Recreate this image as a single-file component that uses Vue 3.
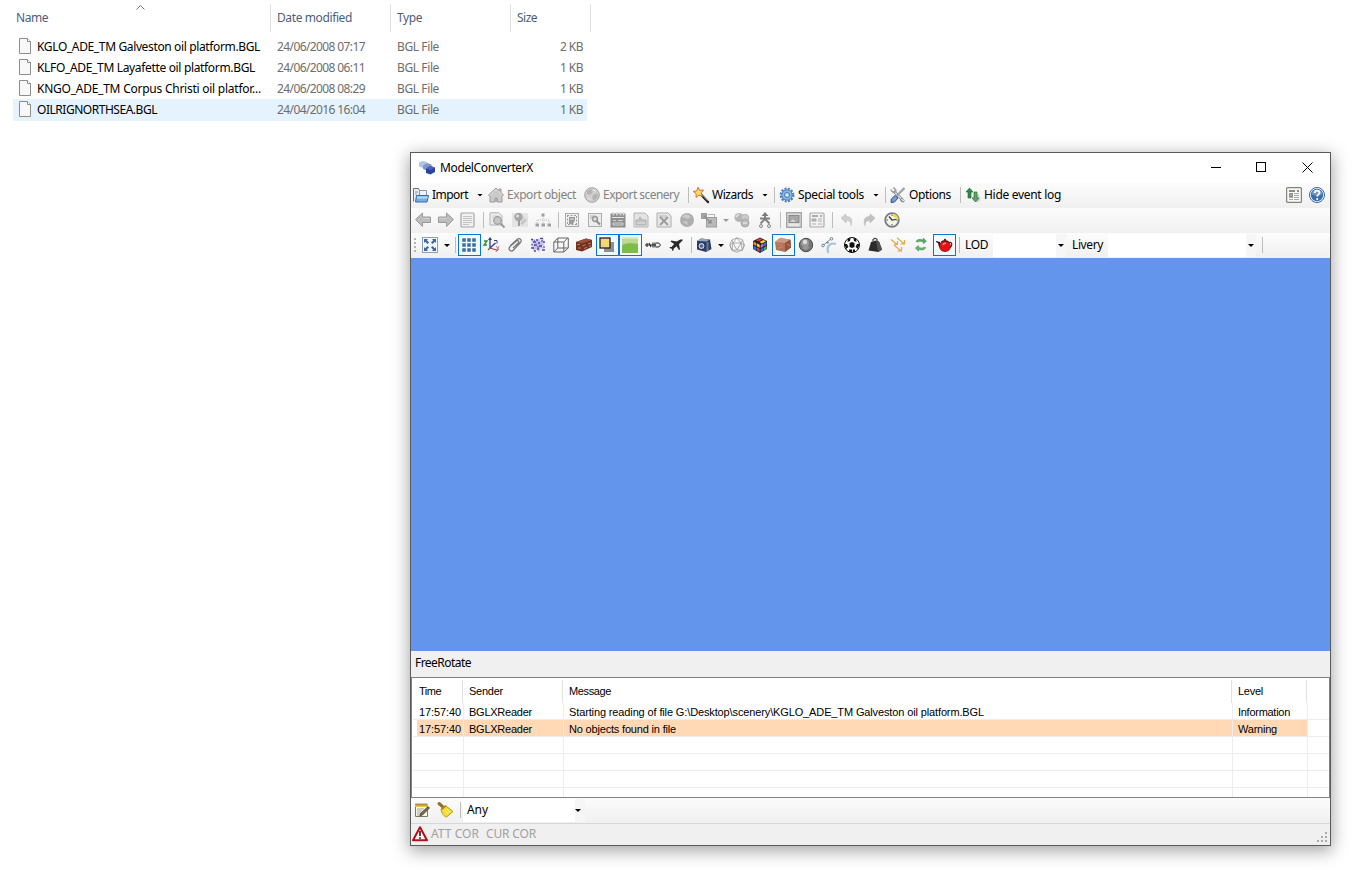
<script setup>
// Adjusts tracking so that a label takes exactly the given width.
const vFit = {
  mounted(el, { value }) {
    const natural = el.getBoundingClientRect().width
    el.style.letterSpacing = `${(value - natural) / el.textContent.length}px`
  },
}

const files = [
  { name: 'KGLO_ADE_TM Galveston oil platform.BGL', w: 223, date: '24/06/2008 07:17', size: '2 KB' },
  { name: 'KLFO_ADE_TM Layafette oil platform.BGL', w: 218, date: '24/06/2008 06:11', size: '1 KB' },
  { name: 'KNGO_ADE_TM Corpus Christi oil platfor...', w: 224, date: '24/06/2008 08:29', size: '1 KB' },
  { name: 'OILRIGNORTHSEA.BGL', w: 120, date: '24/04/2016 16:04', size: '1 KB', hover: true },
]

const menu = [
  { icon: 'import', text: 'Import', w: 36, drop: true },
  { icon: 'house', text: 'Export object', w: 69, off: true },
  { icon: 'globeOff', text: 'Export scenery', w: 76, off: true },
  { sep: true },
  { icon: 'wand', text: 'Wizards', w: 41, drop: true },
  { sep: true },
  { icon: 'gear', text: 'Special tools', w: 66, drop: true },
  { sep: true },
  { icon: 'tools', text: 'Options', w: 42 },
  { sep: true },
  { icon: 'arrows', text: 'Hide event log', w: 77 },
]

const tools = [
  'left', 'right', 'page', '|', 'find', 'pin', 'tree', '|', 'resize', 'wrench', 'clap', 'sheet', 'sheetX', 'ball',
  'scale>', 'merge', 'person', '|', 'screen', 'news', '|', 'undo', 'redo', 'clock!',
]
const views = [
  'expand>', '|', 'grid*', 'axes', 'clip', 'cloud', 'cube', 'brick', 'shadow*', 'ground*', 'bones', 'plane', '|',
  'camera>', 'wire', 'rubik', 'crate*', 'sphere', 'curve', 'soccer', 'weight', 'normals', 'refresh', 'teapot*', '|',
]
const parse = (s) => ({
  sep: s === '|',
  drop: s.endsWith('>'),
  on: s.endsWith('*'),
  live: s.endsWith('!'),
  icon: s.replace(/[>*!]/, ''),
})
const toolItems = tools.map(parse)
const viewItems = views.map(parse)

const log = [
  { time: '17:57:40', sender: 'BGLXReader', msg: 'Starting reading of file G:\\Desktop\\scenery\\KGLO_ADE_TM Galveston oil platform.BGL', w: 415, level: 'Information', lw: 52 },
  { time: '17:57:40', sender: 'BGLXReader', msg: 'No objects found in file', w: 107, level: 'Warning', lw: 39, warn: true },
]

const icons = {
  file: '<path d="M2.500.5h8l3 3v12h-11z" fill="#f8f8f8" stroke="#8d8d8d"/><path d="M10.500.5v3h3" fill="#fff" stroke="#8d8d8d"/>',
  app: '<path d="M0 2.500l3.500-1.500 4.500 1v4.500L4 8 0 6.500z" fill="#b4c3e4"/><path d="M4 5.500l4-2.500 4.500 1.500V9L8.500 11 4 9z" fill="#7e95d2"/><path d="M7 8.500L11.500 6 16 7.500V12l-4.500 2.500L7 13z" fill="#2c439c"/><path d="M7 8.500L11.500 6 16 7.500 11.500 10z" fill="#4e66b8"/>',
  import: '<path d="M.5 14.500V1.500h5l1 2h6v4" fill="#e8edf2" stroke="#67717c"/><path d="M2 5h3M2 7h2" stroke="#8b9aa8"/><path d="M6.500 3.500h7v6h-7z" fill="#eef3f8" stroke="#8a97a5"/><path d="M3.500 8.500h12l-1.500 6.500H2.500z" fill="#78afe2" stroke="#2e6da8"/><path d="M4 10.500h10.500" stroke="#b6d9f5" stroke-width="2"/>',
  house: '<path d="M8 1L.5 8 2 9.500V15h5v-4h2v4h5V9.500L15.500 8 13 5.500V2h-2v2z" fill="#cacaca" stroke="#9c9c9c"/><path d="M2 8l6-5.500L14 8" fill="none" stroke="#dedede"/><path d="M7 11h3v4H7z" fill="#aaa"/>',
  globeOff: '<circle cx="8" cy="8" r="7.300" fill="#d0d0d0" stroke="#a2a2a2"/><path d="M3 4l4-2 2 3-3 3-3-1zM9 8l4-2 1 4-4 4-2-3z" fill="#b4b4b4"/><path d="M9 3l3 1M4 11l3 2" stroke="#e8e8e8"/>',
  wand: '<path d="M7.500 7l7.500 8" stroke="#222" stroke-width="2.400" stroke-linecap="round"/><path d="M8.500 7.200l6 6.500" stroke="#999" stroke-width=".8"/><path d="M5 .3l1.500 3L10.500 3 8.200 5.800l1.500 3.400L6 8l-3 2.500.200-3.700L.3 4.500l3.500-.7z" fill="#ffdd62" stroke="#d5602a" stroke-width=".9"/>',
  gear: '<circle cx="8" cy="8" r="6.300" fill="none" stroke="#4a80bd" stroke-width="2.200" stroke-dasharray="2.100 1.200"/><circle cx="8" cy="8" r="5.200" fill="#8cb4e0" stroke="#4f85c2"/><circle cx="8" cy="8" r="2.600" fill="#a8c8e9" stroke="#4e85c0"/><circle cx="8" cy="8" r="1.100" fill="#f4f7fb"/>',
  tools: '<path d="M4 4.500l9 9" stroke="#808890" stroke-width="2.600"/><path d="M4 4.500l9 9" stroke="#e4e7ea" stroke-width="1.200"/><path d="M1 2.500l1.500 2H5l-.2-2.500L3.200.8A3 3 0 0 1 6 5 3 3 0 0 1 1 2.500z" fill="#c3c9cf" stroke="#7c858d" stroke-width=".7"/><path d="M14.500 13.500a2 2 0 1 1-2.500-2.500" fill="none" stroke="#727c86"/><path d="M14.500 1L7 8.500" stroke="#747d86" stroke-width="2"/><path d="M14.500 1L7 8.500" stroke="#dfe3e6" stroke-width=".8"/><path d="M5 8.500l3 2.500-3.500 4-3.500.5.3-3.500z" fill="#7d9dcb" stroke="#2b5390"/>',
  arrows: '<path d="M8 13l5 2.500 2.500-3-2-6" fill="#d2d2d2"/><path d="M4.500 1L8 5H6v6H3V5H1z" fill="#2f8a42" stroke="#1d6630" stroke-width=".6"/><path d="M10.500 15L7 11h2V5h3v6h2z" fill="#5ca465" stroke="#28733b" stroke-width=".7"/>',
  news: '<rect x="1" y="1" width="14" height="14" rx="1" fill="#f0f0f0" stroke="#a0a0a0" stroke-width="1.200"/><path d="M3 4h6M11 4h2" stroke="#888" stroke-width="1.600"/><path d="M3 7h4v2H3z" fill="#bbb" stroke="#999"/><path d="M9 7h4M9 9h4M3 12h4M9 12h4" stroke="#a8a8a8"/>',
  info: '<rect x=".6" y=".6" width="14.800" height="14.800" rx="1" fill="#f8f8f6" stroke="#85837d" stroke-width="1.200"/><path d="M3 4h6M11 4h2" stroke="#666" stroke-width="1.500"/><path d="M3.500 6.500h3v3h-3z" fill="#aaa" stroke="#888"/><path d="M8 6.500h5M8 8.500h5M3 10.500h4M8 10.500h5M3 12.500h4M8 12.500h5" stroke="#aaa8a2"/>',
  help: '<circle cx="8" cy="8" r="7.500" fill="#fff" stroke="#35639e"/><circle cx="8" cy="8" r="6.200" fill="#376cad"/><path d="M2.300 7a6 6 0 0 1 11.400 0C10 9 6 9 2.300 7z" fill="#6e98cb"/><path d="M5.700 6c.2-3.200 4.900-3 4.800-.2C10.400 7.600 8.200 7.700 8.200 9.600" fill="none" stroke="#fff" stroke-width="1.900"/><circle cx="8.200" cy="12" r="1.100" fill="#fff"/>',
  left: '<path d="M1.500 7.500L8.500 1v4h8v5.500h-8v4z" fill="#b4b4b4" stroke="#8a8a8a"/><path d="M9.500 6.500H16" stroke="#ccc"/>',
  right: '<path d="M16.500 7.500L9.500 1v4h-8v5.500h8v4z" fill="#b4b4b4" stroke="#8a8a8a"/><path d="M2 6.500h7" stroke="#ccc"/>',
  page: '<rect x="1" y="1" width="13" height="14" rx="1" fill="#f0f0f0" stroke="#9a9a9a" stroke-width="1.200"/><path d="M3 4.500h9M3 6.500h9M3 8.500h9M3 10.500h9M3 12.500h6" stroke="#bcbcbc"/>',
  find: '<path d="M1 .8h9l3 3V13H1z" fill="#ebebeb" stroke="#a8a8a8"/><path d="M3 4h7M3 6h3" stroke="#ccc"/><circle cx="8.500" cy="8.500" r="3.800" fill="#bdbdbd" stroke="#8a8a8a" stroke-width="1.200"/><path d="M11.500 11.500l4 4" stroke="#8c8c8c" stroke-width="2.200"/>',
  pin: '<path d="M0 1h16v14H0z" fill="#e2e2e2"/><path d="M8 2l7 5-5 7z" fill="#d0d0d0"/><circle cx="6.500" cy="5" r="4.200" fill="#9a9a9a"/><circle cx="5.500" cy="4" r="1.500" fill="#ddd"/><path d="M7 8v6" stroke="#8c8c8c" stroke-width="2"/><path d="M9 12l5-4" stroke="#bbb" stroke-width="2"/>',
  tree: '<path d="M8 4v4M2 11V8h12v3M8 8v3" fill="none" stroke="#b0b0b0" stroke-dasharray="1 1"/><path d="M6.500 1.500h3v3h-3zM.5 11.500h3.500v3H.5zM6.500 11.500H10v3H6.500zM12.500 11.500H16v3h-3.500z" fill="#929292"/>',
  resize: '<rect x="1.500" y="1.500" width="13" height="13" fill="#eee" stroke="#9d9d9d"/><path d="M5 5h6v3L9 12H5z" fill="#8c8c8c"/><path d="M3 3.500h10M3.500 3v10M12.500 4v9M4 12.500h8" stroke="#8c8c8c" stroke-dasharray="2 1.500"/><path d="M6 7h4" stroke="#ddd"/>',
  wrench: '<rect x="1.500" y="1.500" width="13" height="13" fill="#ececec" stroke="#a0a0a0"/><path d="M3 3h5v4H3z" fill="#c8c8c8"/><circle cx="8" cy="7" r="2.400" fill="#ddd" stroke="#888" stroke-width="1.500"/><path d="M9 8.500l4 4" stroke="#7c7c7c" stroke-width="2.200"/>',
  clap: '<rect x=".5" y="1.500" width="15" height="14" fill="#7d7d7d"/><path d="M2 5.500h12" stroke="#e0e0e0"/><path d="M3.500 0v3.500M7 0v3.500M10.500 0v3.500M13.500 0v3.500" stroke="#d5d5d5" stroke-width="1.500"/><path d="M3 8.500h3M8 8.500h5M3 11h10v2H3z" stroke="#d0d0d0" fill="none"/>',
  sheet: '<path d="M1 1h11l3 3v11H1z" fill="#e1e1e1" stroke="#aaa"/><path d="M3 8h3l1-3 2 3h4v5H3z" fill="#bcbcbc" stroke="#a5a5a5"/><path d="M4 11h8M5 4h5" stroke="#ddd"/>',
  sheetX: '<path d="M1 1h11l3 3v11H1z" fill="#e5e5e5" stroke="#a0a0a0"/><path d="M3 3h8v3H3z" fill="#c8c8c8"/><path d="M4 5l8 8M12 5l-8 8" fill="none" stroke="#8a8a8a" stroke-width="1.800"/>',
  ball: '<circle cx="8" cy="8" r="7" fill="#a2a2a2"/><path d="M3 5c3-4 6-3 9 0L9 7zM3 10l5-1 1 4z" fill="#c2c2c2"/>',
  scale: '<path d="M.5 1.500h5v5h-5z" fill="#999" stroke="#888"/><rect x="5.500" y="5.500" width="10" height="9.500" fill="#b0b0b0" stroke="#8f8f8f"/><path d="M3 4l7 7M10 8v3H7" fill="none" stroke="#777" stroke-width="1.200"/><path d="M7 2.500h7M13.500 2v3" stroke="#aaa"/>',
  merge: '<circle cx="5" cy="5.500" r="4.500" fill="#aaa"/><circle cx="11" cy="6" r="3.700" fill="#c6c6c6" stroke="#aaa"/><circle cx="11" cy="11" r="4" fill="#b0b0b0" stroke="#9c9c9c"/><path d="M2 5l3-3M9 11h4" stroke="#e1e1e1" stroke-width="1.500"/>',
  person: '<path d="M8 0l3.500 4H4.500z" fill="#666"/><path d="M8 3v5M3 6.500h10M8 7l-4.500 4.500M8 7l4.500 4.500" stroke="#6c6c6c" stroke-width="1.900"/><circle cx="4" cy="14" r="1.500" fill="#eee" stroke="#777"/><circle cx="12" cy="14" r="1.500" fill="#eee" stroke="#777"/>',
  screen: '<rect x=".7" y=".7" width="14.600" height="14.600" fill="#d8d8d8" stroke="#8c8c8c" stroke-width="1.200"/><rect x="3" y="3.500" width="10" height="7" fill="#999" stroke="#777"/><path d="M4 10l3-3 3 3" fill="#ccc"/><path d="M3 13h10" stroke="#f4f4f4"/>',
  undo: '<path d="M1 6l5-4v2.500c5 0 7 3 5 9 0-3-1-5-5-5V11z" fill="#c8c8c8" stroke="#b2b2b2" stroke-width=".6" transform="translate(2 0)"/>',
  redo: '<path d="M14 6L9 2v2.500c-5 0-7 3-5 9 0-3 1-5 5-5V11z" fill="#b8b8b8" stroke="#aaa" stroke-width=".6"/>',
  clock: '<circle cx="8" cy="8" r="6.800" fill="#f5f3e5" stroke="#777b87" stroke-width="1.800"/><path d="M9 1.500a7 7 0 0 1 5.700 6l-3-1L9 4z" fill="#f5d93b"/><path d="M8 2.500v1.500M8 12v1.500M2.500 8H4M12 8h1.500" stroke="#555"/><path d="M5 4.500L8 8l4-.5" fill="none" stroke="#303540" stroke-width="1.200"/>',
  expand: '<rect x=".5" y=".5" width="15" height="15" fill="#f2f7fc" stroke="#8b9fb9"/><path d="M2 2h4L4.800 3.200 7 5.500 5.500 7 3.200 4.800 2 6zM14 2h-4l1.200 1.200L9 5.500 10.500 7l2.300-2.200L14 6zM2 14h4l-1.200-1.200L7 10.500 5.500 9l-2.300 2.200L2 10zM14 14h-4l1.200-1.200L9 10.500 10.500 9l2.300 2.200L14 10z" fill="#3d669b"/>',
  grid: '<path d="M1 1h4v4H1zM6 1h4v4H6zM11 1h4v4h-4zM1 6h4v4H1zM6 6h4v4H6zM11 6h4v4h-4zM1 11h4v4H1zM6 11h4v4H6zM11 11h4v4h-4z" fill="#3b6ca3" stroke="#f3f8fd" stroke-width=".5"/>',
  axes: '<path d="M6 11V1.500" stroke="#27437f" stroke-width="1.300"/><path d="M6 0l2 3H4z" fill="#27437f"/><path d="M6 11l8 2.500" stroke="#c73447" stroke-width="1.300"/><path d="M6 11l5.500-5" stroke="#3b3f9c" stroke-width="1.400"/><path d="M0 4h3L0 8h3M4 13l2-2" fill="none" stroke="#39833e" stroke-width="1.300"/><path d="M10 3.500h3v3" stroke="#3b3f9c" fill="none"/><path d="M12 9l3 4M15 9l-3 6" stroke="#a95a6d" stroke-width=".8"/>',
  clip: '<path d="M3.500 8.500L10 2.500c2.500-2 5.500.5 3.500 3L6.500 13c-2.500 2.500-6-.5-3.500-3.500L9.500 4c1.500-1 3 .5 2 1.800L6 11" fill="none" stroke="#777" stroke-width="1.200"/>',
  cloud: '<path d="M1 4l3-2 2 2 3-3 1 3 4-2-1 4 2 2-3 1 2 3-3-1-2 4-3-3-3 2v-4L1 9l3-2z" fill="#c4bfe8"/><path d="M1 2.500h2M6 3h2M10 1.500h3M3 5h3M8 6h2M13 5h2M4 8h3M9 9h3M1 11h3M7 12h2M12 13h3M4 14h2" stroke="#4d45a6" stroke-width="1.600"/><path d="M4 3.500h1M11 4h2M1 7.500h2M7 10h2M13 10h2" stroke="#7b70c4" stroke-width="1.400"/>',
  cube: '<path d="M.8 5h10v10H.8zM4.800 1h10.500v10H4.800zM.8 5l4-4M10.800 5l4-4M.8 15l4-4M10.800 15l4.500-4" fill="none" stroke="#666" stroke-width="1"/>',
  brick: '<path d="M0 5l10-3.500L16 3v7L6 14.500 0 13z" fill="#73321f"/><path d="M0 5l10-3.500L16 3 6 6.500z" fill="#94503c"/><path d="M1 7.500h3M6.500 9l3-1.200M12 7l3-1M2 11h3M8 11.500l3-1.200M13 9.500l2-1" stroke="#b87a60" stroke-width="1.200"/>',
  shadow: '<path d="M5 5h10v10H5z" fill="#8f8f8f"/><rect x="1" y="1" width="10" height="10" fill="#f5d675" stroke="#222" stroke-width="1.300"/>',
  ground: '<rect width="16" height="16" fill="#badb8d"/><path d="M0 8c4-2 11-2 16-1v9H0z" fill="#7fbb4b"/><path d="M0 1h16" stroke="#d6e9bd" stroke-width="2"/>',
  bones: '<path d="M0 8h11M2 6v4M4 6l2 4M8 5.500v5M10 5.500v5" stroke="#222" stroke-width="1.100"/><path d="M11 6h2c3 .5 3 3.500 0 4h-2" fill="#eee" stroke="#222"/>',
  plane: '<path d="M14 2.500c1 0 1 .5.500 1L11 7l1 5.500-1 .5L8.500 9.200 5.500 12v1.500l-1 .5-.8-2.200-2.200-.8.5-1h1.500L6.200 7 2.500 4.500 3.300 3.500l5.200 1L12.500 2.500z" fill="#2a2a2a"/>',
  camera: '<path d="M1 4l4-2.500 9 1L15.500 12 10 15 1 12.500z" fill="#2c3f60"/><path d="M1 4l4-2.500 9 1-3.500 2z" fill="#93a5c4"/><path d="M11.500 5v9" stroke="#647aa0" stroke-width="2"/><circle cx="5.500" cy="9" r="3.600" fill="#c2cddd" stroke="#182440"/><circle cx="5.500" cy="9" r="1.800" fill="#4c6797"/>',
  wire: '<path d="M8 .8l5.500 2L15.300 8l-2 5L8 15.300l-5-2L.8 8l2-5zM8 .8L4 6l8 0zM4 6l4 7 4-7M.8 8L4 6 2.800 3M15.300 8L12 6l1.500-3M3 13.300l5-.3 5.300.3M.8 8l2.200 5.300L4 6M15.300 8l-2 5.300L12 6" fill="none" stroke="#999" stroke-width=".8"/>',
  rubik: '<path d="M1 4l7-3.500L15 4v8l-7 4-7-4z" fill="#222"/><path d="M4 3.200L8 1.200l2.500 1.200-4 2.200z" fill="#ee3636"/><path d="M7.500 5l4-2 2.500 1.200L10 6.500z" fill="#f6db2f"/><path d="M1.500 4.600l2.900 1.500v3L1.500 7.600z" fill="#f58a2c"/><path d="M5 6.500l2.700 1.200v3L5 9.300z" fill="#f8db2e"/><path d="M1.500 8.800l2.900 1.500v3L1.500 12z" fill="#3a6be0"/><path d="M8.700 8l2.800-1.400v3L8.700 11z" fill="#f15ac0"/><path d="M5 10.500l2.700 1.300v3L5 13.400z" fill="#ee3636"/><path d="M12 6.300L14.600 5v3L12 9.300z" fill="#3a6be0"/><path d="M8.700 12l2.800-1.500v3L8.700 15z" fill="#3a6be0"/><path d="M12 10.500L14.600 9v3L12 13.400z" fill="#39b951"/>',
  crate: '<path d="M0 5l5-4 10 1.500 1 8L10 15 1 13z" fill="#b4725a"/><path d="M0 5l5-4 10 1.500L10 6z" fill="#cf9884"/><path d="M10 6l5.500-3.500.5 8L10 15z" fill="#925340"/><path d="M2 7l6 1.500M3 11l5-1M12 7l3 2" stroke="#c5866e"/>',
  sphere: '<circle cx="8" cy="8" r="6.700" fill="#777" stroke="#4a4a4a"/><circle cx="7" cy="6" r="4" fill="#999"/><circle cx="7" cy="5" r="2.200" fill="#ddd"/><path d="M4 11l4-2 4 1-4 3z" fill="#999"/>',
  curve: '<path d="M7.500 16c-2.500-6 1-11 7.500-9" fill="none" stroke="#a5c4e4" stroke-width="2.200"/><path d="M2 8.500L10.500 1.500" stroke="#6d8094" stroke-width=".9"/><circle cx="2" cy="8.500" r="1.300" fill="#fff" stroke="#6d8094"/><circle cx="10.500" cy="1.800" r="1.300" fill="#fff" stroke="#6d8094"/><circle cx="6.500" cy="5.500" r="1.100" fill="#617c99"/>',
  soccer: '<circle cx="8" cy="8" r="7.500" fill="#fff" stroke="#111"/><path d="M5.500 6L8 5l2.500 1v4L8 11l-2.500-1zM4 1.500L6.500 1 6 4 3.500 5zM12 1.500L9.500 1 10 4l2.500 1zM.5 7l2.500 0 1.500 3L2 12zM15.500 7L13 7l-1.500 3 2.500 2zM5 12.500l3 0 0 3-3-.5zM11 12.500l-2.200 0 0 3 2.200-.5z" fill="#111"/>',
  weight: '<path d="M4 5l5-1.500 3 1 3 8-3.500 2.500-10-1.500z" fill="#2b2b2b"/><path d="M9 4l2 11 4-2.500-3-8z" fill="#505050"/><path d="M6 4.500V2.500L8 1.300l2 1v2" fill="none" stroke="#444" stroke-width="1.200"/>',
  normals: '<path d="M1 2.500l6 5M7 .8l7 6M4 8l7 6M7.500 4v3.500H4M14.500 3v4h-4M11.500 10v4h-4" fill="none" stroke="#e3a94b" stroke-width="1.200"/>',
  refresh: '<path d="M2 6.500C3 3 8 3 11 4.500V2l4 4-4 3V7C8 5.500 5 6 4.500 7z" fill="#5bab64" stroke="#338246" stroke-width=".6" transform="translate(1.500 -.5) scale(.8)"/><path d="M14 9.500C13 13 8 13 5 11.500V14l-4-4 4-3v2c3 1.500 6 1 6.500 0z" fill="#6bb66b" stroke="#338246" stroke-width=".6" transform="translate(1.500 3) scale(.8)"/>',
  teapot: '<path d="M0 4l4 1 2 6-3-1-1-4-2-1z" fill="#3a0808"/><path d="M13 5.500c3-1 4 3 1 5" fill="none" stroke="#7b0808" stroke-width="1.200"/><path d="M5 5.500c2-2 6-2 8 0 3 4 1 9-4 9s-7-5-4-9z" fill="#e41313" stroke="#8e0b0b" stroke-width=".8"/><path d="M5.500 4.800c2-1.200 5-1.200 7 0" stroke="#3a0808" stroke-width="1.200" fill="none"/><circle cx="9" cy="2.800" r="1.100" fill="#7d0b0b"/><path d="M7 8c.5-1.500 2-2 3-1.500" stroke="#ff9c8c" stroke-width="1.500" fill="none"/>',
  note: '<path d="M1.500 2.500h12v12h-12z" fill="#faf7e6" stroke="#7c7862"/><path d="M1 2.500h13v2.500H1z" fill="#f0c534"/><path d="M2 1v3M4 1v3M6 1v3M8 1v3M10 1v3M12 1v3" stroke="#9a8229" stroke-width=".8"/><path d="M3 7h7M3 9h5M3 11h4M3 13h3" stroke="#a4a4a0"/><path d="M14 4.500l1.500 1.500-7 7-2.500 1 .5-2.500z" fill="#77704c" stroke="#373425" stroke-width=".7"/>',
  broom: '<path d="M2 1.500l4 3.500" stroke="#8a7228" stroke-width="3" stroke-linecap="round"/><path d="M4 7l4.500-3.500L16 9.500 9.500 15C7 14.500 4.500 11.500 4 7z" fill="#f4dc3c" stroke="#b39a1c"/><path d="M4.500 7.500L9 4" stroke="#d07018" stroke-width="1.300"/><path d="M8 8l3 4M10 7l3 3" stroke="#fff08a"/>',
  alert: '<path d="M8 1.200L15 14.300H1z" fill="#f8f4f2" stroke="#b50f18" stroke-width="2" stroke-linejoin="round"/><path d="M8 5v5" stroke="#333" stroke-width="1.800"/><circle cx="8" cy="12" r="1" fill="#333"/>',
}
</script>

<template>
  <main class="desktop">
    <section class="explorer">
      <div class="head">
        <span class="hcell name"><span v-fit="32">Name</span>
          <svg class="caret" width="9" height="5" viewBox="0 0 9 5"><path d="M.5 4.500l4-4 4 4" fill="none" stroke="#777" /></svg>
        </span>
        <span class="hcell date"><span v-fit="75">Date modified</span></span>
        <span class="hcell type"><span v-fit="25">Type</span></span>
        <span class="hcell size"><span v-fit="20">Size</span></span>
      </div>
      <div v-for="f in files" :key="f.name" class="file" :class="{ hover: f.hover }">
        <svg class="ficon" viewBox="0 0 16 16" v-html="icons.file" />
        <span class="fname"><span v-fit="f.w">{{ f.name }}</span></span>
        <span class="fdate"><span v-fit="88">{{ f.date }}</span></span>
        <span class="ftype"><span v-fit="42">BGL File</span></span>
        <span class="fsize"><span v-fit="23">{{ f.size }}</span></span>
      </div>
    </section>

    <section class="window">
      <header class="title">
        <svg class="ic" viewBox="0 0 16 16" v-html="icons.app" />
        <span class="caption"><span v-fit="93">ModelConverterX</span></span>
        <svg class="ctl" width="102" height="11" viewBox="0 0 102 11" fill="none" stroke="#000">
          <path d="M0 5.500h10M45.500.5h9v9h-9z" shape-rendering="crispEdges" />
          <path d="M91.500.5l10 10M101.500.5l-10 10" />
        </svg>
      </header>

      <div class="bar menu">
        <template v-for="(m, i) in menu" :key="i">
          <i v-if="m.sep" class="line" />
          <div v-else class="item" :class="{ off: m.off, dropped: m.drop }">
            <svg class="ic" viewBox="0 0 16 16" v-html="icons[m.icon]" />
            <span v-fit="m.w">{{ m.text }}</span>
            <b v-if="m.drop" class="tri" />
          </div>
        </template>
        <div class="right">
          <svg class="ic" viewBox="0 0 16 16" v-html="icons.info" />
          <svg class="ic" viewBox="0 0 16 16" v-html="icons.help" />
        </div>
      </div>

      <div class="bar tools">
        <template v-for="(t, i) in toolItems" :key="i">
          <i v-if="t.sep" class="sep" />
          <div v-else class="btn" :class="{ drop: t.drop, live: t.live }">
            <svg class="ic" viewBox="0 0 16 16" v-html="icons[t.icon]" />
            <b v-if="t.drop" class="tri gray" />
          </div>
        </template>
      </div>

      <div class="bar views">
        <i class="grip" />
        <template v-for="(t, i) in viewItems" :key="i">
          <i v-if="t.sep" class="sep" />
          <div v-else class="btn" :class="{ drop: t.drop, on: t.on }">
            <svg class="ic" viewBox="0 0 16 16" v-html="icons[t.icon]" />
            <b v-if="t.drop" class="tri" />
          </div>
        </template>
        <span class="lab lod"><span v-fit="23">LOD</span></span>
        <span class="combo c1"><b class="tri" /></span>
        <span class="lab liv"><span v-fit="31">Livery</span></span>
        <span class="combo c2"><b class="tri" /></span>
        <i class="sep" />
      </div>

      <div class="viewport" />
      <div class="mode"><span v-fit="56">FreeRotate</span></div>

      <div class="log">
        <div class="lhead">
          <span><span v-fit="22">Time</span></span><span><span v-fit="34">Sender</span></span><span><span v-fit="42">Message</span></span><span><span v-fit="25">Level</span></span>
        </div>
        <div v-for="(l, i) in log" :key="i" class="lrow" :class="{ warn: l.warn }">
          <span><span v-fit="42">{{ l.time }}</span></span><span><span v-fit="63">{{ l.sender }}</span></span><span><span v-fit="l.w">{{ l.msg }}</span></span><span><span v-fit="l.lw">{{ l.level }}</span></span><span />
        </div>
        <div v-for="n in 4" :key="'e' + n" class="lrow"><span /><span /><span /><span /><span /></div>
      </div>

      <div class="bar filter">
        <svg class="ic" viewBox="0 0 16 16" v-html="icons.note" />
        <svg class="ic" viewBox="0 0 16 16" v-html="icons.broom" />
        <i class="line" />
        <span class="combo c3"><span v-fit="21">Any</span><b class="tri" /></span>
      </div>
      <footer class="status">
        <svg class="ic" viewBox="0 0 16 16" v-html="icons.alert" />
        <span v-fit="48">ATT COR</span>
        <span v-fit="50" class="cur">CUR COR</span>
        <svg class="size-grip" width="11" height="11" viewBox="0 0 11 11"><path d="M8 0h2v2H8zM4 4h2v2H4zM8 4h2v2H8zM0 8h2v2H0zM4 8h2v2H4zM8 8h2v2H8z" fill="#aaa" /></svg>
      </footer>
    </section>
  </main>
</template>

<style>
body { background: #fff; }
</style>

<style scoped>
.desktop {
  position: relative;
  width: 1356px;
  height: 870px;
  overflow: hidden;
  background: #fff;
  font: 12px/16px "Noto Sans", "Open Sans", sans-serif;
  font-stretch: 87.5%;
  color: #000;
  white-space: nowrap;
}
.desktop * { box-sizing: border-box; }
.desktop span > span, .item > span, .mode > span, .status > span { display: inline-block; }
svg { display: block; flex: none; overflow: visible; }
.ic { width: 16px; height: 16px; }

.explorer { width: 591px; padding-top: 4px; }
.head { display: flex; height: 32px; color: #4c607a; }
.hcell { height: 28px; padding: 6px 0 0 6px; border-right: 1px solid #e3e3e3; }
.name { position: relative; width: 271px; padding-left: 16px; }
.date, .type { width: 120px; }
.size { width: 80px; }
.caret { position: absolute; left: 136px; top: 1px; }
.file { display: flex; align-items: center; width: 574px; height: 21px; margin-left: 13px; padding-top: 1px; color: #6d6d6d; }
.file.hover { height: 22px; padding-bottom: 1px; background: #e5f3ff; }
.ficon { width: 16px; height: 16px; margin: -2px 0 0 4px; }
.fname { width: 240px; padding-left: 4px; color: #000; }
.fdate { width: 120px; padding-left: 4px; }
.ftype { width: 120px; padding-left: 4px; }
.fsize { width: 70px; text-align: right; }

.window {
  position: absolute;
  left: 410px;
  top: 152px;
  width: 921px;
  height: 694px;
  display: flex;
  flex-direction: column;
  background: #f0f0f0;
  border: 1px solid #5a5a5a;
  box-shadow: 0 4px 16px 1px rgba(0, 0, 0, 0.36);
}
.title { display: flex; align-items: center; height: 30px; padding: 0 0 1px 8px; background: #fff; }
.title .ic { margin-top: 1px; }
.caption { margin-left: 5px; }
.ctl { margin: 0 17px 0 auto; }

.bar { display: flex; align-items: center; height: 25px; flex: none; padding-bottom: 1px; background: linear-gradient(#fcfcfc, #f0f0f0); }
.menu { padding-left: 2px; }
.item { display: flex; align-items: center; margin-right: 8px; }
.item > span { margin-left: 3px; }
.item.off { color: #838383; }
.item.dropped { margin-right: 0; }
.item .tri { margin: 0 5px 0 9px; }
.line { flex: none; width: 1px; height: 16px; margin: 0 4px 0 1px; background: #bdbdbd; }
.tri { flex: none; width: 6px; height: 3px; margin-top: 1px; background: #000; clip-path: polygon(0 0, 100% 0, 50% 100%); }
.tri.gray { background: #999; }
.right { display: flex; gap: 7px; margin: 0 5px 0 auto; }

.tools .ic { opacity: 0.85; }
.tools .live .ic { opacity: 1; }
.btn { display: flex; align-items: center; flex: none; width: 23px; height: 22px; padding-left: 3px; }
.btn.drop { width: 32px; padding-left: 2px; }
.btn.drop .tri { margin-left: 6px; }
.btn.on { padding-left: 2px; border: 1px solid #0078d7; background: #f3f8fd; }
.sep { flex: none; width: 6px; height: 16px; border-left: 3px solid transparent; background: linear-gradient(#bdbdbd, #bdbdbd) 0 0 / 1px 100% no-repeat; }
.grip { width: 2px; height: 14px; margin: 0 4px 0 3px; background: repeating-linear-gradient(#b5b5b5 0 2px, transparent 2px 4px); }
.lab.lod { width: 31px; padding-left: 3px; }
.lab.liv { width: 42px; padding-left: 6px; }
.combo { display: flex; align-items: center; justify-content: flex-end; height: 23px; padding-right: 2px; background: linear-gradient(90deg, #fff calc(100% - 10px), #f6f6f6 0); }
.c1 { width: 73px; }
.c2 { width: 148px; margin-right: 3px; }

.viewport { height: 393px; flex: none; background: #6495ed; }
.mode { height: 26px; padding: 4px 4px 0; background: #f0f0f0; }

.log {
  height: 121px;
  overflow: hidden;
  padding-left: 1px;
  border: 1px solid #828282;
  background: #fff;
  font-family: "Liberation Sans", sans-serif;
  font-size: 11px;
}
.lhead { display: flex; height: 25px; }
.lhead > span { height: 23px; margin-top: 2px; padding: 3px 0 0 6px; border-right: 1px solid #e2e2e2; }
.lhead > span:nth-child(1) { width: 50px; }
.lhead > span:nth-child(2) { width: 100px; }
.lhead > span:nth-child(3) { width: 669px; }
.lhead > span:nth-child(4) { width: 75px; }
.lrow { display: flex; height: 17px; border-bottom: 1px solid #ededed; }
.lrow > span { height: 17px; padding: 1px 0 0 6px; border-right: 1px solid #ededed; }
.lrow > span:nth-child(1) { width: 51px; }
.lrow > span:nth-child(2) { width: 100px; padding-left: 5px; }
.lrow > span:nth-child(3) { width: 669px; padding-left: 5px; }
.lrow > span:nth-child(4) { width: 75px; padding-left: 5px; }
.lrow > span:nth-child(5) { flex: 1; border: 0; }
.lrow.warn > span:not(:last-child) { background: #ffd8b5; height: 16px; }
.lrow.warn > span:first-child { background: linear-gradient(90deg, #fff 4px, #ffd8b5 0); }

.filter { padding-left: 3px; }
.filter .ic + .ic { margin-left: 7px; }
.filter .line { margin: 0 2px 0 7px; }
.c3 { width: 122px; justify-content: space-between; padding: 0 4px; }
.status { display: flex; align-items: center; height: 22px; padding: 0 2px 1px 1px; border-top: 1px solid #d7d7d7; color: #a0a0a0; }
.status .ic + span { margin-left: 3px; }
.status .cur { margin-left: 7px; }
.size-grip { margin: 7px 0 0 auto; }
</style>
